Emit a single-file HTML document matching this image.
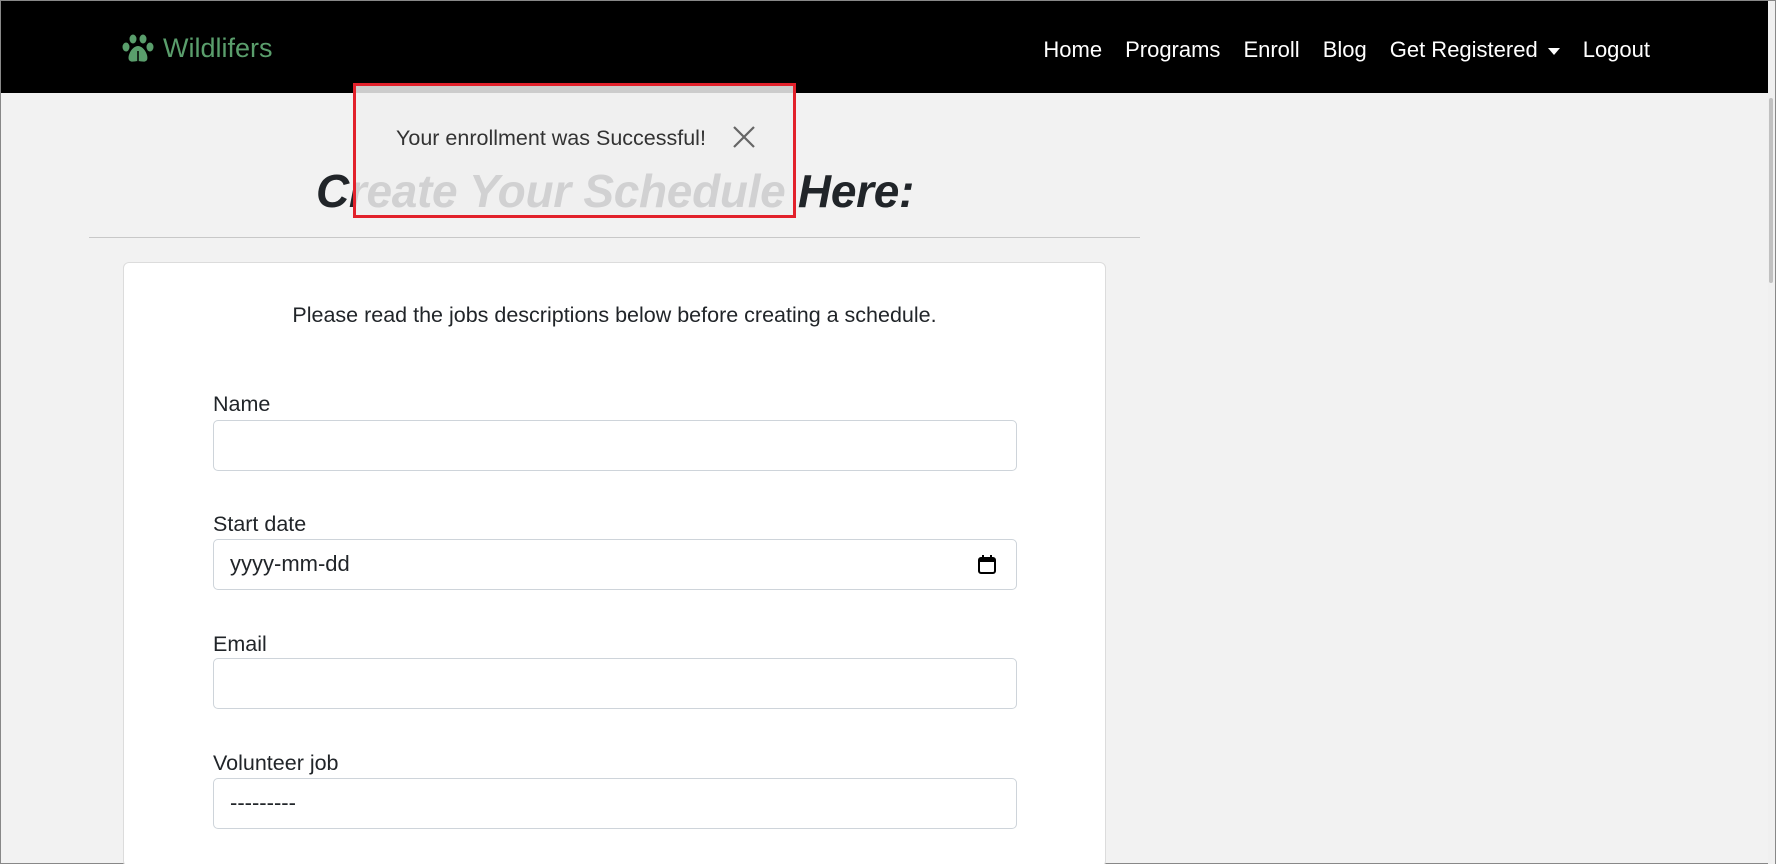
<!DOCTYPE html>
<html><head><meta charset="utf-8"><style>
*{box-sizing:border-box;margin:0;padding:0}
html,body{overflow:hidden}
body{width:1776px;height:864px;background:#f2f2f2;font-family:"Liberation Sans",sans-serif;color:#212529;position:relative;border:1px solid #888}
.nav{position:absolute;left:0;top:0;width:1768px;height:92px;background:#000}
.logo{position:absolute;left:121px;top:32px;color:#5a9e6c;font-size:27px;display:flex;align-items:center;gap:9px}
.links{position:absolute;right:119px;top:36px;color:#fff;font-size:22px;display:flex;gap:23px;align-items:center}
.caret{display:inline-block;border-left:6px solid transparent;border-right:6px solid transparent;border-top:7px solid #fff;margin-left:10px;vertical-align:middle}
h1{position:absolute;left:0;width:1228px;text-align:center;top:163px;font-size:46px;font-weight:bold;font-style:italic;letter-spacing:-0.3px}
.hr{position:absolute;left:88px;top:236px;width:1051px;height:1px;background:#c8c8c8}
.card{position:absolute;left:122px;top:261px;width:983px;height:620px;background:#fff;border:1px solid #dcdcdc;border-radius:6px}
.intro{position:absolute;left:0;width:100%;top:40px;text-align:center;font-size:21.5px}
.lbl{position:absolute;left:89px;font-size:21.5px}
.inp{position:absolute;left:89px;width:804px;height:51px;border:1px solid #ced4da;border-radius:5px;font-size:22px;padding:11px 16px}
.toast{position:absolute;left:352px;top:82px;width:443px;height:135px;border:3px solid #e2212b;background:rgba(240,240,240,0.85)}
.toast span{position:absolute;left:40px;top:40px;font-size:21.5px;color:#333}
.sb{position:absolute;right:0;top:0;width:7px;height:864px;background:#f0f0f0}
.sb div{position:absolute;left:1px;top:97px;width:4px;height:185px;background:#c1c1c1;border-radius:2px}
</style></head><body>
<div class="nav">
 <div class="logo"><svg width="32" height="30" viewBox="0 0 32 30"><g fill="#5a9e6c"><ellipse cx="4" cy="13" rx="3.5" ry="4.5"/><ellipse cx="11" cy="5" rx="3.5" ry="4.5"/><ellipse cx="21" cy="5" rx="3.5" ry="4.5"/><ellipse cx="28" cy="13" rx="3.5" ry="4.5"/><path d="M16 12c-6 0-11 10-9 14 2 3 6 1 9 1s7 2 9-1c2-4-3-14-9-14z"/></g><path d="M16 17v10" stroke="#000" stroke-width="1.5"/></svg>Wildlifers</div>
 <div class="links"><span>Home</span><span>Programs</span><span>Enroll</span><span>Blog</span><span>Get Registered<i class="caret"></i></span><span>Logout</span></div>
</div>
<h1>Create Your Schedule Here:</h1>
<div class="hr"></div>
<div class="card" style="height:605px">
 <div class="intro">Please read the jobs descriptions below before creating a schedule.</div>
 <div class="lbl" style="top:129px">Name</div>
 <div class="inp" style="top:157px"></div>
 <div class="lbl" style="top:249px">Start date</div>
 <div class="inp" style="top:276px">yyyy-mm-dd<svg style="position:absolute;right:20px;top:15px" width="18" height="19" viewBox="0 0 18 19"><rect x="1" y="3" width="16" height="15" rx="2" fill="none" stroke="#000" stroke-width="2"/><rect x="1" y="3" width="16" height="4" fill="#000"/><rect x="4" y="0" width="2" height="4" fill="#000"/><rect x="12" y="0" width="2" height="4" fill="#000"/></svg></div>
 <div class="lbl" style="top:369px">Email</div>
 <div class="inp" style="top:395px"></div>
 <div class="lbl" style="top:488px">Volunteer job</div>
 <div class="inp" style="top:515px">---------</div>
</div>
<div class="toast"><span>Your enrollment was Successful!</span>
<svg style="position:absolute;left:376px;top:39px" width="24" height="24" viewBox="0 0 24 24"><path d="M2 2L22 22M22 2L2 22" stroke="#666" stroke-width="2.2"/></svg></div>
<div class="sb"><div></div></div>
</body></html>
